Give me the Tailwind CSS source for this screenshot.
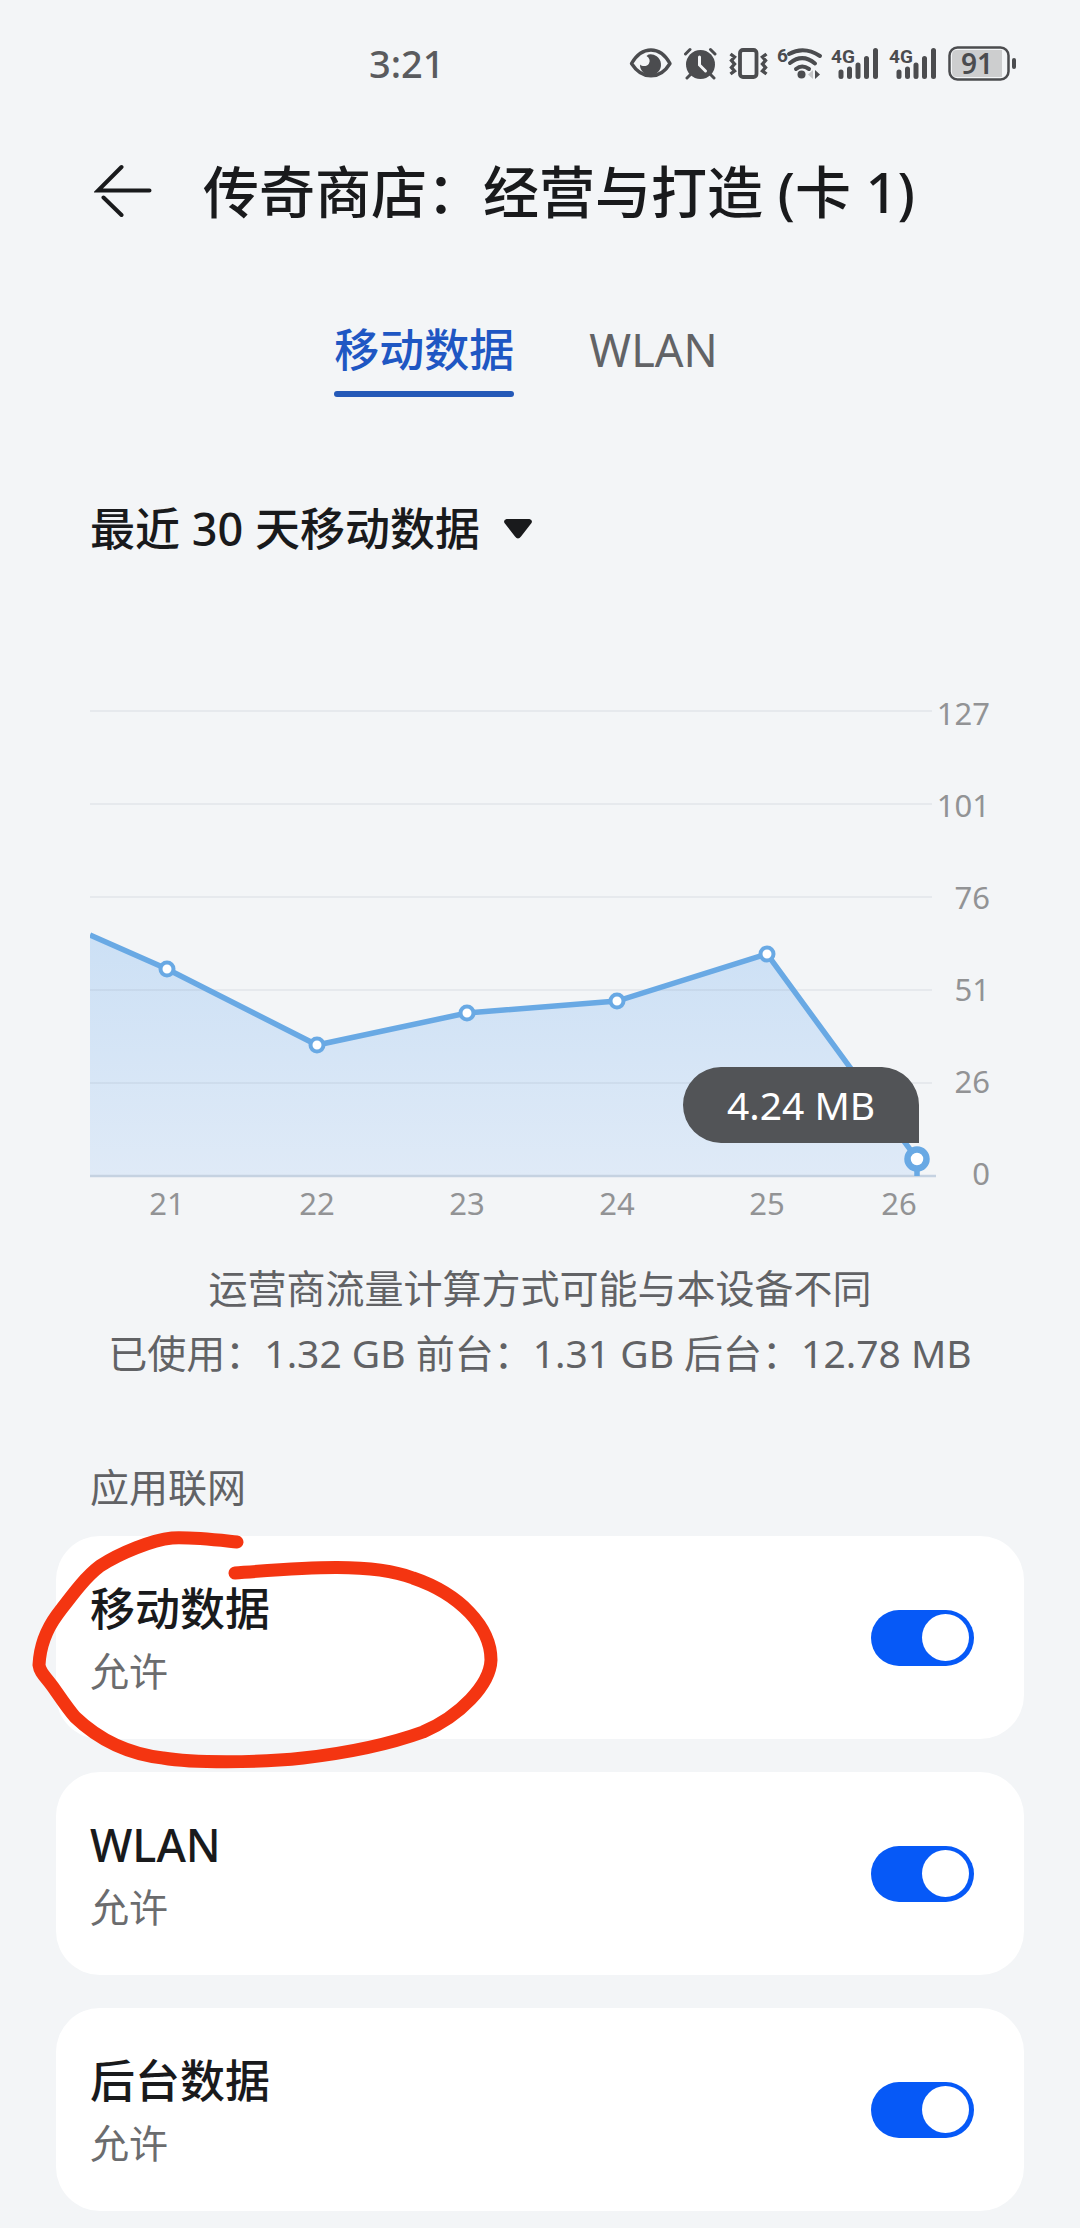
<!DOCTYPE html>
<html lang="zh-CN">
<head>
<meta charset="utf-8">
<meta name="viewport" content="width=device-width, initial-scale=1">
<title>传奇商店：经营与打造 (卡 1)</title>
<script src="https://cdn.jsdelivr.net/npm/@tailwindcss/browser@4"></script>
</head>
<body class="min-h-screen bg-[#f3f5f7] pb-4 font-['Noto_Sans','Noto_Sans_CJK_SC',sans-serif] text-[#191a1c]">

<!-- Status bar -->
<div class="flex h-32 items-center justify-between pr-16 pl-[369px] text-[#4b4c4f]">
  <time class="pb-0.5 text-[38px] leading-none font-medium text-[#5a5b5e]">3:21</time>
  <div class="flex items-center" aria-hidden="true">
    <svg class="mr-2.5 h-9 w-11" viewBox="0 0 44 36" fill="none">
      <path d="M2.500 17.500C13-.5 31-.5 41 17.500C31 34 13 34 2.500 17.500Z" stroke="currentColor" stroke-width="3.400" stroke-linejoin="round"/>
      <path d="M19.500 8.500A10.500 10.500 0 1 1 11 18.500C13 20.500 18 21 20 17.500C21.500 14.500 20.500 12 17.500 10Z" fill="currentColor"/>
    </svg>
    <svg class="mr-3 h-9 w-[34px]" viewBox="0 0 34 36" fill="none" stroke="currentColor" stroke-linecap="round">
      <circle cx="17.500" cy="18.500" r="14.500" fill="currentColor" stroke="none"/>
      <path d="M8 28l-4 4M27 28l4 4M2.500 8l4.500-4.500M32 8l-4.500-4.500" stroke-width="3"/>
      <path d="M16.500 11v8l6 6" stroke="#f3f5f7" stroke-width="3"/>
    </svg>
    <svg class="mr-2 h-9 w-10" viewBox="0 0 40 36" fill="none" stroke="currentColor">
      <rect x="11" y="4" width="16.500" height="27" rx="3" stroke-width="3.800"/>
      <path d="M1.500 8l4 3-3 3.500 3 3.500-3 3.500 3 3.500-4 3M37.500 8l-4 3 3 3.500-3 3.500 3 3.500-3 3.500 4 3" stroke-width="3.400"/>
    </svg>
    <svg class="mr-2.5 h-9 w-[45px] overflow-visible" viewBox="0 0 45 36" fill="none" stroke="currentColor" stroke-linecap="round">
      <text x="0" y="16" class="fill-current font-['Roboto',sans-serif] text-[19px] font-bold" stroke="none">6</text>
      <path d="M12 8Q27-.5 43 10M13 17Q25.500 7 38 17.500M19 23Q25 18 32 23" stroke-width="4"/>
      <circle cx="24.500" cy="28.500" r="4" fill="currentColor" stroke="none"/>
      <path d="M36 24v9l-5-4.500z" fill="#c4c5c7" stroke="none"/>
      <path d="M38 24v9l5-4.500z" fill="currentColor" stroke="none"/>
    </svg>
    <svg class="mr-3 h-9 w-[46px] overflow-visible" viewBox="0 0 46 36" fill="none" stroke="currentColor" stroke-linecap="round">
      <text x="-1" y="17" class="fill-current font-['Roboto',sans-serif] text-[19px] font-bold" stroke="none">4G</text>
      <path d="M9 26v4.500M17.500 23v7.500M26 19v11.500M34.500 12.500v18M43.500 4.500v26" stroke-width="5"/>
    </svg>
    <svg class="mr-3 h-9 w-[46px] overflow-visible" viewBox="0 0 46 36" fill="none" stroke="currentColor" stroke-linecap="round">
      <text x="-1" y="17" class="fill-current font-['Roboto',sans-serif] text-[19px] font-bold" stroke="none">4G</text>
      <path d="M9 26v4.500M17.500 23v7.500M26 19v11.500M34.500 12.500v18M43.500 4.500v26" stroke-width="5"/>
    </svg>
    <svg class="h-9 w-[68px] overflow-visible" viewBox="0 0 68 36" fill="none">
      <rect x="1.500" y="1.500" width="59" height="32" rx="8" stroke="currentColor" stroke-width="2.500"/>
      <path d="M9 4H54V31H9Q4 31 4 26V9Q4 4 9 4Z" fill="#cdcecf"/>
      <path d="M66 14v7" stroke="currentColor" stroke-width="4" stroke-linecap="round"/>
      <text x="29" y="28" text-anchor="middle" class="fill-current text-[28px] font-semibold">91</text>
    </svg>
  </div>
</div>

<!-- Title bar -->
<header class="flex h-[124px] items-center gap-[51px] pl-[94px]">
  <button type="button" aria-label="返回" class="shrink-0">
    <svg class="h-14 w-[58px]" viewBox="0 0 58 56" fill="none" stroke="currentColor" stroke-width="4" stroke-linecap="round">
      <path d="M27.500 5L4 28.500H55.500M9.500 35.500L27.500 53"/>
    </svg>
  </button>
  <h1 class="pt-0.5 text-[56px] leading-none font-medium whitespace-nowrap">传奇商店：经营与打造 (卡 1)</h1>
</header>

<!-- Tabs -->
<nav class="flex items-start justify-center gap-[75px] pt-[62px] pr-7 text-[45px] leading-[72px]">
  <a href="#mobile" aria-current="page" class="flex flex-col gap-[5px] font-medium text-[#1f57c3]">移动数据<span class="h-1.5 rounded-full bg-[#2459b8]"></span></a>
  <a href="#wlan" class="text-[#626366]">WLAN</a>
</nav>

<main>
  <section id="mobile" class="px-[90px] pt-[98px]">
    <button type="button" class="flex items-center gap-6 text-[45px] leading-[68px] font-medium">
      <span>最近 30 天移动数据</span>
      <svg class="h-5 w-7" viewBox="0 0 28 20" fill="currentColor" aria-hidden="true"><path d="M2.500 0H25.500Q29 1 27.500 4L17 17.500Q14 21.500 11 17.500L.5 4Q-1 1 2.500 0Z"/></svg>
    </button>

    <svg class="mt-[127px] block h-auto w-full" viewBox="0 0 900 540" role="img" aria-label="每日移动数据用量">
      <defs>
        <linearGradient id="area" x1="0" y1="0" x2="0" y2="1">
          <stop offset="0" stop-color="#cce0f5"/>
          <stop offset="1" stop-color="#dfeaf7"/>
        </linearGradient>
      </defs>
      <path d="M0 245L77 279L227 355L377 323L527 311L677 264L827 469V486H0Z" fill="url(#area)"/>
      <path d="M0 21H842M0 114H842M0 207H842M0 300H842M0 393H842" stroke="#8c98a4" stroke-opacity=".12" stroke-width="2"/>
      <path d="M0 486H846" stroke="#c5d2e1" stroke-width="2.500"/>
      <path d="M0 245L77 279L227 355L377 323L527 311L677 264L827 469V486" fill="none" stroke="#69a9e4" stroke-width="5.500"/>
      <g fill="#fff" stroke="#69a9e4" stroke-width="4">
        <circle cx="77" cy="279" r="6.500"/>
        <circle cx="227" cy="355" r="6.500"/>
        <circle cx="377" cy="323" r="6.500"/>
        <circle cx="527" cy="311" r="6.500"/>
        <circle cx="677" cy="264" r="6.500"/>
        <circle cx="827" cy="469" r="9.500" stroke-width="6.500"/>
      </g>
      <path d="M631 377H792A38 38 0 0 1 829 415V453H631A38 38 0 0 1 631 377Z" fill="#525457"/>
      <text x="711" y="430" text-anchor="middle" class="fill-white text-[39px]">4.24 MB</text>
      <g text-anchor="end" class="fill-[#929395] text-[31px]">
        <text x="900" y="35">127</text>
        <text x="900" y="127">101</text>
        <text x="900" y="219">76</text>
        <text x="900" y="311">51</text>
        <text x="900" y="403">26</text>
        <text x="900" y="495">0</text>
      </g>
      <g text-anchor="middle" class="fill-[#929395] text-[31px]">
        <text x="77" y="525">21</text>
        <text x="227" y="525">22</text>
        <text x="377" y="525">23</text>
        <text x="527" y="525">24</text>
        <text x="677" y="525">25</text>
        <text x="809" y="525">26</text>
      </g>
    </svg>
  </section>

  <div class="pt-[25px] text-center text-[39px] leading-[65px] text-[#616265]">
    <p>运营商流量计算方式可能与本设备不同</p>
    <p>已使用：1.32 GB 前台：1.31 GB 后台：12.78 MB</p>
  </div>

  <section class="px-14 pt-[72px]">
    <h2 class="pl-[34px] text-[39px] leading-[60px] text-[#616265]">应用联网</h2>
    <div class="mt-[19px] flex flex-col gap-[33px]">
      <label class="relative flex h-[203px] items-center justify-between rounded-[44px] bg-white pr-[50px] pl-[34px]">
        <span class="flex flex-col pt-0.5">
          <span class="text-[45px] leading-[64px] font-medium">移动数据</span>
          <span class="text-[39px] leading-[60px] text-[#6b6c6e]">允许</span>
        </span>
        <input type="checkbox" role="switch" checked class="flex h-14 w-[103px] appearance-none items-center rounded-full bg-[#b9bcc1] px-[5px] before:size-[47px] before:rounded-full before:bg-white checked:justify-end checked:bg-[#0659f7]">
        <svg class="pointer-events-none absolute -top-2 -left-6 h-[240px] w-[470px] overflow-visible" viewBox="0 0 470 240" fill="none" aria-hidden="true">
          <path d="M205 14C185 12 160 9 140 10C120 12 88 25 68 38C52 50 38 70 25 87C14 102 8 117 7 137C8 145 14 149 21 159C28 169 36 181 43 189C66 211 96 226 131 230C160 235 225 235 271 230C315 225 355 217 391 204C428 188 458 157 459 132C459 99 428 66 381 50C338 34 270 40 203 45" stroke="#f43511" stroke-width="13" stroke-linecap="round" stroke-linejoin="round"/>
        </svg>
      </label>
      <label class="flex h-[203px] items-center justify-between rounded-[44px] bg-white pr-[50px] pl-[34px]">
        <span class="flex flex-col pt-0.5">
          <span class="text-[45px] leading-[64px] font-medium">WLAN</span>
          <span class="text-[39px] leading-[60px] text-[#6b6c6e]">允许</span>
        </span>
        <input type="checkbox" role="switch" checked class="flex h-14 w-[103px] appearance-none items-center rounded-full bg-[#b9bcc1] px-[5px] before:size-[47px] before:rounded-full before:bg-white checked:justify-end checked:bg-[#0659f7]">
      </label>
      <label class="flex h-[203px] items-center justify-between rounded-[44px] bg-white pr-[50px] pl-[34px]">
        <span class="flex flex-col pt-0.5">
          <span class="text-[45px] leading-[64px] font-medium">后台数据</span>
          <span class="text-[39px] leading-[60px] text-[#6b6c6e]">允许</span>
        </span>
        <input type="checkbox" role="switch" checked class="flex h-14 w-[103px] appearance-none items-center rounded-full bg-[#b9bcc1] px-[5px] before:size-[47px] before:rounded-full before:bg-white checked:justify-end checked:bg-[#0659f7]">
      </label>
    </div>
  </section>
</main>
</body>
</html>
